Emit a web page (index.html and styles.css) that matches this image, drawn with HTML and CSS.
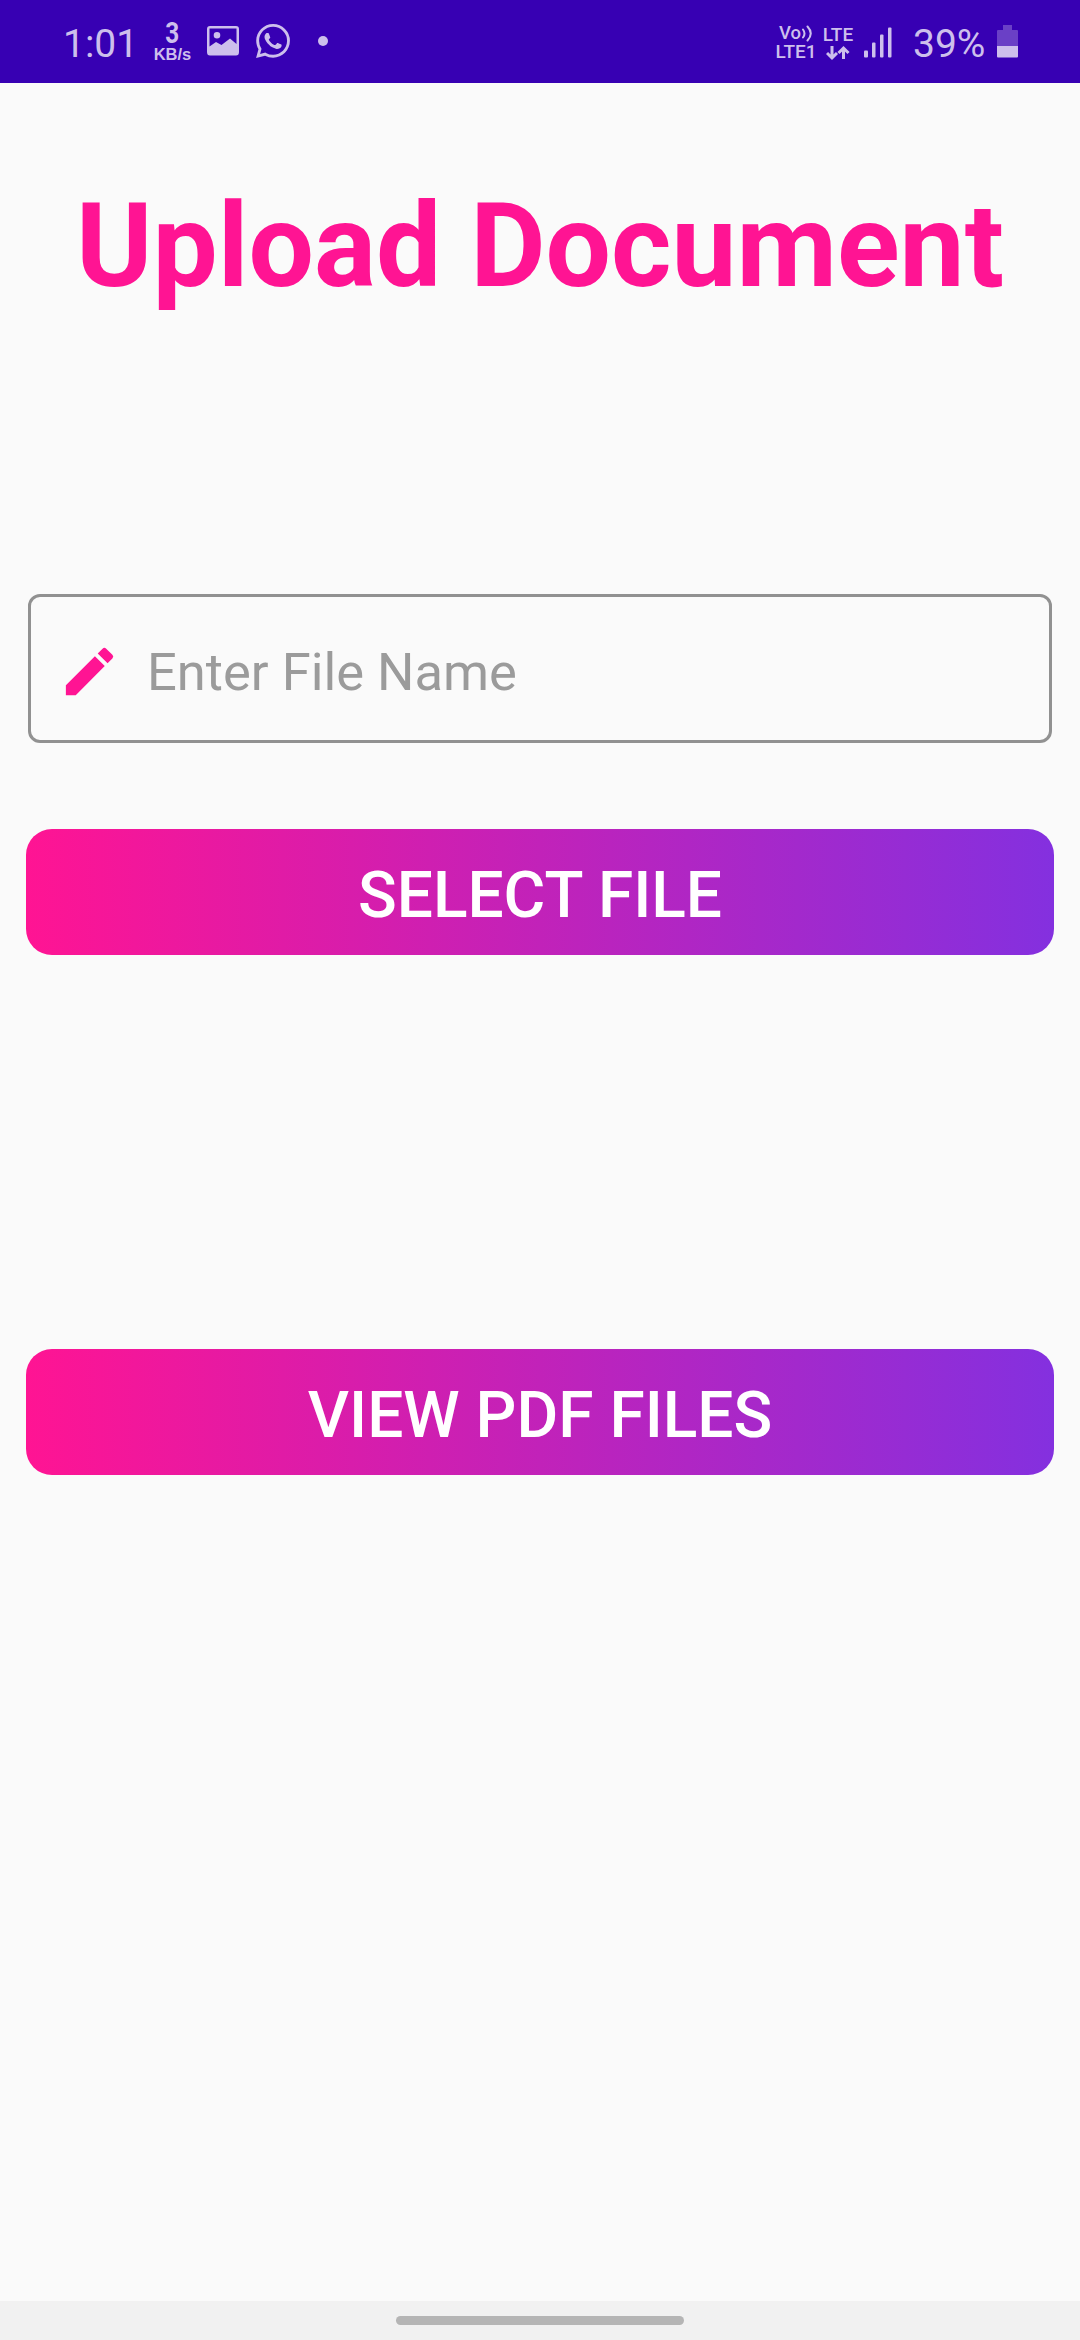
FILE: index.html
```html
<!DOCTYPE html>
<html lang="en">
<head>
<meta charset="utf-8">
<title>Upload Document</title>
<link rel="stylesheet" href="styles.css">
</head>
<body>
<header class="status">
  <span class="clock">1:01</span>
  <span class="speed"><b class="speed-value">3</b><b class="speed-unit">KB/s</b></span>
  <svg class="photo" width="32" height="30" viewBox="0 0 32 30"><path fill="currentColor" fill-rule="evenodd" d="M3 0H29Q32 0 32 3V26Q32 29.5 29 29.5H3Q0 29.5 0 26V3Q0 0 3 0ZM2.5 2.5V20.500L9 16L14.500 19L23 12.500L29.500 18V2.500ZM10 6a3.300 3.300 0 1 1 0 6.600a3.300 3.300 0 1 1 0-6.600Z"/></svg>
  <svg class="whatsapp" width="34" height="34" viewBox="0 0 24 24"><path fill="currentColor" d="M17.472 14.382c-.297-.149-1.758-.867-2.030-.967-.273-.099-.471-.148-.670.150-.197.297-.767.966-.940 1.164-.173.199-.347.223-.644.075-.297-.150-1.255-.463-2.390-1.475-.883-.788-1.480-1.761-1.653-2.059-.173-.297-.018-.458.130-.606.134-.133.298-.347.446-.520.149-.174.198-.298.298-.497.099-.198.050-.371-.025-.520-.075-.149-.669-1.612-.916-2.207-.242-.579-.487-.500-.669-.510-.173-.008-.371-.010-.570-.010-.198 0-.520.074-.792.372-.272.297-1.040 1.016-1.040 2.479 0 1.462 1.065 2.875 1.213 3.074.149.198 2.096 3.200 5.077 4.487.709.306 1.262.489 1.694.625.712.227 1.360.195 1.871.118.571-.085 1.758-.719 2.006-1.413.248-.694.248-1.289.173-1.413-.074-.124-.272-.198-.570-.347m-5.421 7.403h-.004a9.870 9.870 0 0 1-5.031-1.378l-.361-.214-3.741.982.998-3.648-.235-.374a9.860 9.860 0 0 1-1.510-5.260c.001-5.450 4.436-9.884 9.888-9.884 2.640 0 5.122 1.030 6.988 2.898a9.825 9.825 0 0 1 2.893 6.994c-.003 5.450-4.437 9.884-9.885 9.884m8.413-18.297A11.815 11.815 0 0 0 12.050 0C5.495 0 .160 5.335.157 11.892c0 2.096.547 4.142 1.588 5.945L.057 24l6.305-1.654a11.882 11.882 0 0 0 5.683 1.448h.005c6.554 0 11.890-5.335 11.893-11.893a11.821 11.821 0 0 0-3.480-8.413z"/></svg>
  <span class="dot"></span>
  <span class="spacer"></span>
  <span class="volte">
    <span class="volte-top">Vo<svg width="11" height="17" viewBox="0 0 11 17" fill="none" stroke="currentColor" stroke-width="2" stroke-linecap="round"><path d="M1 4.500Q4 8.500 1 12.500M5.500 1.500Q12 8.500 5.500 15.500"/></svg></span>
    <span class="volte-bottom">LTE1</span>
  </span>
  <span class="lte">
    <span>LTE</span>
    <svg width="24" height="16" viewBox="0 0 24 16" fill="none" stroke="currentColor" stroke-width="3"><path d="M6 1V13M1 8L6 13L11 8M17.500 14V3M12.500 8L17.500 3L22.500 8"/></svg>
  </span>
  <svg class="signal" width="28" height="31" viewBox="0 0 28 31" fill="currentColor"><rect y="23.500" width="4" height="7" rx="1"/><rect x="8" y="15.500" width="3.500" height="15" rx="1"/><rect x="16" y="7.500" width="3.500" height="23" rx="1"/><rect x="24" y=".5" width="3.500" height="30" rx="1"/></svg>
  <span class="percent">39%</span>
  <svg class="battery" width="21" height="33" viewBox="0 0 21 33"><path fill="#6a40c6" d="M6 0H15V5H20Q21 5 21 6V21H0V6Q0 5 1 5H6Z"/><path fill="currentColor" d="M0 21H21V31.500Q21 32.500 20 32.500H1Q0 32.500 0 31.500Z"/></svg>
</header>
<main class="content">
  <h1 class="title">Upload Document</h1>
  <label class="field">
    <svg width="63" height="63" viewBox="0 0 24 24" fill="#ff1493"><path d="M3 17.250V21h3.750L17.810 9.940l-3.750-3.750L3 17.250zM20.710 7.040a1 1 0 0 0 0-1.410l-2.340-2.340a1 1 0 0 0-1.410 0l-1.830 1.830 3.750 3.750 1.830-1.830z"/></svg>
    <input class="input" type="text" placeholder="Enter File Name">
  </label>
  <button class="button select" type="button">SELECT FILE</button>
  <button class="button view" type="button">VIEW PDF FILES</button>
</main>
<footer class="nav"><span class="handle"></span></footer>
</body>
</html>
```
FILE: styles.css
```css
* { box-sizing: border-box; }
body {
  margin: 0;
  width: 1080px;
  height: 2340px;
  display: flex;
  flex-direction: column;
  overflow: hidden;
  background: #fafafa;
  font-family: Roboto, sans-serif;
}
svg { display: block; flex: none; }
.status {
  height: 83px;
  flex: none;
  display: flex;
  align-items: flex-start;
  padding: 0 62px 0 63px;
  background: #3700b3;
  color: #cdbfec;
  white-space: nowrap;
}
.clock, .percent { font-size: 39px; line-height: 46px; margin-top: 20px; }
.clock { width: 90px; }
.speed {
  width: 39px;
  margin-top: 20px;
  display: flex;
  flex-direction: column;
  align-items: center;
}
.speed-value { font-size: 29px; line-height: 27px; transform: scaleX(.84); }
.speed-unit { font: bold 16.5px/14px "Liberation Sans", sans-serif; }
.photo { margin: 26px 0 0 15px; }
.whatsapp { margin: 24px 0 0 17px; }
.dot {
  width: 10px;
  height: 10px;
  margin: 36px 0 0 28px;
  border-radius: 50%;
  background: currentColor;
}
.spacer { flex: 1; }
.volte, .lte {
  display: flex;
  flex-direction: column;
  align-items: center;
  font-weight: 500;
}
.volte { width: 40px; margin-top: 25px; }
.volte-top { display: flex; gap: 1px; font-size: 18.5px; line-height: 17px; }
.volte-bottom { font-size: 19px; line-height: 18px; margin-top: 1px; }
.lte { width: 32px; margin: 25px 0 0 6px; font-size: 19px; line-height: 19px; }
.lte svg { margin-top: 1px; }
.signal { margin: 27px 0 0 10px; }
.percent { margin-left: 21px; width: 74px; }
.clock, .percent { margin-top: 21px; }
.battery { margin: 25px 0 0 10px; }
.content {
  flex: 1;
  display: flex;
  flex-direction: column;
  padding: 95px 26px 0;
}
.title {
  margin: 0;
  text-align: center;
  color: #ff1493;
  font-size: 116px;
  line-height: 136px;
  font-weight: 700;
  white-space: nowrap;
}
.field {
  height: 149px;
  margin: 280px 2px 0;
  padding: 6px 27px 0;
  display: flex;
  align-items: center;
  gap: 26px;
  border: 3px solid #919191;
  border-radius: 12px;
}
.input {
  flex: 1;
  min-width: 0;
  padding: 1px 0 0;
  border: 0;
  outline: 0;
  background: transparent;
  font: 400 52.5px/62px Roboto, sans-serif;
}
.input::placeholder { color: #9b9b9b; opacity: 1; }
.button {
  height: 126px;
  flex: none;
  padding: 6px 0 0;
  border: 0;
  border-radius: 26px;
  background: linear-gradient(90deg, #ff1493, #8430df);
  color: #fff;
  font: 500 64px/75px Roboto, sans-serif;
}
.select { margin-top: 86px; }
.view { margin-top: 394px; }
.nav {
  height: 39px;
  flex: none;
  display: flex;
  justify-content: center;
  padding-top: 15px;
  background: #f1f1f1;
}
.handle { width: 288px; height: 9px; border-radius: 5px; background: #b5b5b5; }
```
